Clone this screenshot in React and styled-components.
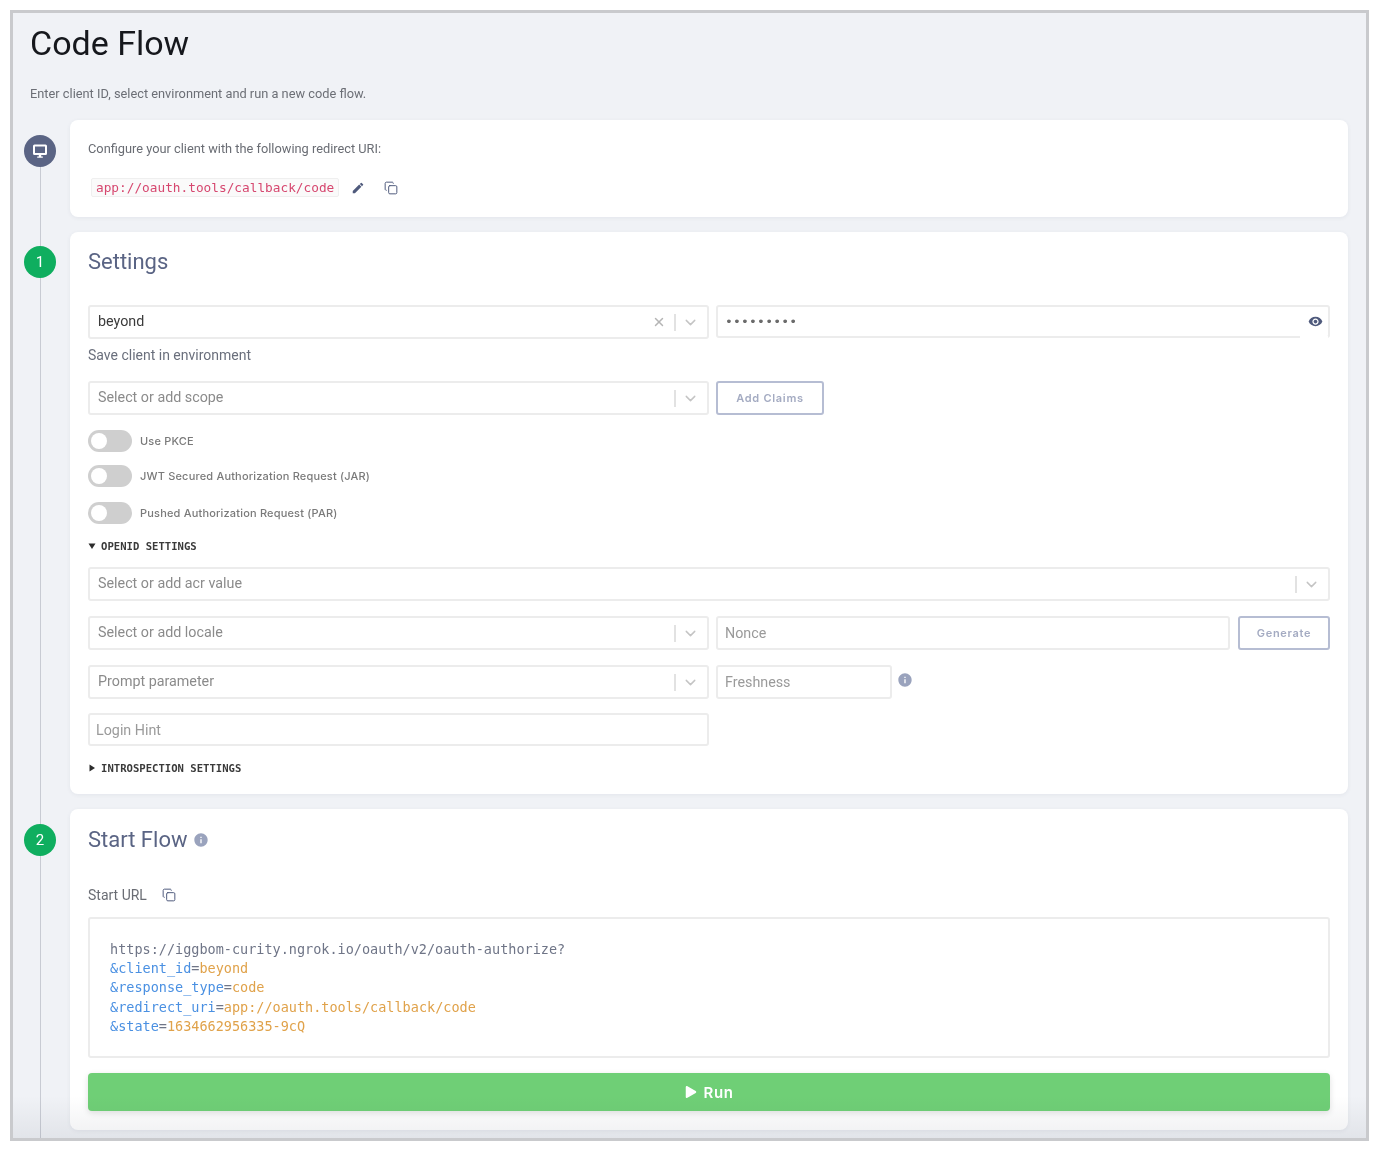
import React from "react";
import styled, { createGlobalStyle } from "styled-components";
import { ChevronDown, Copy, X } from "lucide-react";
import { MdEdit, MdInfo, MdVisibility } from "react-icons/md";
import { FaPlay } from "react-icons/fa";

const Global = createGlobalStyle`
  html, body {
    margin: 0;
    background: #fff;
    font-family: Roboto, "Liberation Sans", sans-serif;
  }
  * { box-sizing: border-box; }
`;

const mono = `"DejaVu Sans Mono", "Liberation Mono", monospace`;

const Frame = styled.main`
  position: relative;
  display: flex;
  flex-direction: column;
  width: 1359px;
  height: 1131px;
  margin: 10px;
  padding: 9px 18px 0 11px;
  background: #f0f2f6;
  border: 3px solid #c9cacd;
  overflow: hidden;
  filter: blur(0.4px);
`;

const BottomFade = styled.div`
  position: absolute;
  left: 0;
  right: 0;
  bottom: 0;
  height: 42px;
  background: linear-gradient(rgba(40, 50, 70, 0), rgba(40, 50, 70, 0.07));
  pointer-events: none;
`;

const Header = styled.header`
  padding-left: 6px;
`;

const PageTitle = styled.h1`
  margin: 0;
  font-size: 34px;
  line-height: 42px;
  font-weight: 400;
  color: #16181d;
`;

const Lead = styled.p`
  margin: 22px 0 18px;
  font-size: 12.8px;
  line-height: 16px;
  color: #6c6f76;
`;

const Steps = styled.div`
  position: relative;
  flex: 1;
  display: flex;
  flex-direction: column;
  gap: 15px;

  &::before {
    content: "";
    position: absolute;
    left: 15.5px;
    top: 30px;
    bottom: 0;
    width: 1px;
    background: #c8cbd3;
  }
`;

const Step = styled.section`
  position: relative;
  display: flex;
  gap: 14px;
  align-items: flex-start;
`;

const Marker = styled.div`
  flex: none;
  display: flex;
  align-items: center;
  justify-content: center;
  width: 32px;
  height: 32px;
  margin-top: ${({ $top }) => $top}px;
  border-radius: 50%;
  background: ${({ $color }) => $color};
  color: #fff;
  font-size: 15px;
`;

const Card = styled.div`
  flex: 1;
  min-width: 0;
  padding: ${({ $padding }) => $padding};
  background: #fff;
  border-radius: 8px;
  box-shadow: 0 1px 4px rgba(60, 70, 100, 0.07);
`;

const Muted = styled.div`
  font-size: 12.8px;
  line-height: 16px;
  color: #6a6d74;
`;

const UriRow = styled.div`
  display: flex;
  align-items: center;
  margin-top: 21px;
  padding-left: 3px;
`;

const CodeChip = styled.code`
  padding: 0 4px;
  height: 19px;
  font-family: ${mono};
  font-size: 12.78px;
  line-height: 17px;
  color: #d6476f;
  background: #fafafa;
  border: 1px solid #efefef;
  border-radius: 2px;
`;

const IconButton = styled.span`
  display: inline-flex;
  margin-left: ${({ $left }) => $left}px;
  margin-bottom: ${({ $lift }) => $lift || 0}px;
  color: ${({ $color }) => $color || "#4f5a7c"};
`;

const SectionTitle = styled.h2`
  display: flex;
  align-items: center;
  gap: 6px;
  margin: 0;
  font-size: 22px;
  line-height: 30px;
  font-weight: 400;
  color: #5a6484;
`;

const Form = styled.div`
  display: flex;
  flex-direction: column;
  margin-top: 28px;
`;

const Row = styled.div`
  display: flex;
  align-items: ${({ $center }) => ($center ? "center" : "stretch")};
  gap: 7px;
  margin-top: ${({ $top }) => $top || 0}px;
`;

const Select = styled.div`
  display: flex;
  align-items: center;
  flex: ${({ $full }) => ($full ? "1" : "none")};
  width: ${({ $full }) => ($full ? "auto" : "621px")};
  height: 34px;
  padding: 0 8px;
  background: #fff;
  border: 2px solid #ececec;
  border-radius: 3px;
`;

const SelectValue = styled.span`
  flex: 1;
  padding-bottom: 2px;
  font-size: 14.3px;
  color: ${({ $filled }) => ($filled ? "#3b3b3b" : "#8b8b8b")};
`;

const Separator = styled.span`
  width: 2px;
  height: 17px;
  margin: 0 6px 0 8px;
  background: #e2e2e2;
`;

const Input = styled.input`
  flex: ${({ $width }) => ($width ? "none" : "1")};
  width: ${({ $width }) => ($width ? `${$width}px` : "auto")};
  min-width: 0;
  height: ${({ $height }) => $height || 34}px;
  padding: 0 ${({ $pad }) => $pad || 7}px;
  font-family: inherit;
  font-size: 14.3px;
  color: #3b3b3b;
  background: #fff;
  border: 2px solid #ececec;
  border-radius: 3px;
  outline: none;

  &::placeholder {
    color: #9a9a9a;
    opacity: 1;
  }
`;

const SecretField = styled.div`
  position: relative;
  flex: 1;
  display: flex;
  align-items: center;
  justify-content: space-between;
  height: 33px;
  padding: 0 5px 0 7px;
  border: 2px solid #ececec;
  border-radius: 3px;

  &::after {
    content: "";
    position: absolute;
    right: 0;
    bottom: -2px;
    width: 28px;
    height: 2px;
    background: #fff;
  }
`;

const SecretDots = styled.span`
  font-family: ${mono};
  font-size: 13px;
  letter-spacing: 0.2px;
  color: #6b6b6b;
`;

const Hint = styled.div`
  margin-top: 8px;
  font-size: 14px;
  line-height: 16px;
  color: #6a6f7c;
`;

const OutlineButton = styled.button`
  flex: none;
  width: ${({ $width }) => $width}px;
  margin-left: ${({ $left }) => $left || 0}px;
  height: 34px;
  padding: 0;
  font-family: Inter, Roboto, sans-serif;
  font-size: 11px;
  font-weight: 600;
  letter-spacing: 0.7px;
  color: #a4abc2;
  background: #fff;
  border: 2px solid #b6bdd3;
  border-radius: 3px;
`;

const ToggleRow = styled.div`
  display: flex;
  align-items: center;
  gap: 8px;
  margin-top: ${({ $top }) => $top}px;
`;

const Toggle = styled.span`
  display: flex;
  align-items: center;
  width: 44px;
  height: 22px;
  padding: 0 3px;
  background: #cfcfcf;
  border-radius: 11px;

  &::before {
    content: "";
    width: 16px;
    height: 16px;
    background: #fff;
    border-radius: 50%;
  }
`;

const ToggleLabel = styled.span`
  font-family: Inter, Roboto, sans-serif;
  font-size: 11px;
  font-weight: 500;
  letter-spacing: 0.18px;
  color: #7a7a7a;
`;

const Disclosure = styled.div`
  display: flex;
  align-items: center;
  gap: 5px;
  height: 14px;
  margin-top: ${({ $top }) => $top}px;
  font-family: ${mono};
  font-size: 10.6px;
  font-weight: 700;
  color: #3a3a3a;
`;

const Caret = styled.svg`
  flex: none;
  width: 8px;
  height: 8px;
  fill: #2c2c2c;
`;

const UrlLabel = styled.div`
  display: flex;
  align-items: center;
  height: 16px;
  margin-top: 32px;
  font-size: 14px;
  color: #6a6d74;
`;

const CodeBox = styled.pre`
  height: 141px;
  margin: 14px 0 0;
  padding: 21px 20px;
  font-family: ${mono};
  font-size: 13.5px;
  line-height: 19.2px;
  color: #6f7587;
  background: #fff;
  border: 2px solid #ececec;
  border-radius: 3px;
`;

const Key = styled.span`
  color: #4a90e2;
`;

const Value = styled.span`
  color: #e0a24a;
`;

const RunButton = styled.button`
  display: flex;
  align-items: center;
  justify-content: center;
  gap: 7px;
  width: 100%;
  height: 38px;
  margin-top: 15px;
  font-family: Inter, Roboto, sans-serif;
  font-size: 15px;
  font-weight: 600;
  letter-spacing: 0.6px;
  color: #fff;
  background: #6fcf76;
  border: 0;
  border-radius: 4px;
  box-shadow: 0 2px 6px rgba(0, 0, 0, 0.12);
`;

const DownCaret = () => (
  <Caret viewBox="0 0 8 8">
    <path d="M0.5 1.5h7L4 7z" />
  </Caret>
);

const RightCaret = () => (
  <Caret viewBox="0 0 8 8">
    <path d="M1.5 0.5v7L7 4z" />
  </Caret>
);

const MonitorIcon = () => (
  <svg width="16" height="16" viewBox="0 0 16 16" fill="#fff">
    <path d="M2.5 1.5h11A1.5 1.5 0 0 1 15 3v7.5a1.5 1.5 0 0 1-1.5 1.5h-11A1.5 1.5 0 0 1 1 10.500V3a1.500 1.500 0 0 1 1.500-1.500zM3 3.400v6.700h10V3.400z" fillRule="evenodd" />
    <path d="M6.800 12h2.400v1.600h1.600v1.200H5.200v-1.200h1.600z" />
  </svg>
);

const DropdownField = ({ value, placeholder, clearable, full }) => (
  <Select $full={full}>
    <SelectValue $filled={!!value}>{value || placeholder}</SelectValue>
    {clearable && <X size={14} color="#b5b5b5" strokeWidth={2.5} />}
    <Separator />
    <ChevronDown size={17} color="#c4c4c4" strokeWidth={2} />
  </Select>
);

const SwitchRow = ({ label, top }) => (
  <ToggleRow $top={top}>
    <Toggle />
    <ToggleLabel>{label}</ToggleLabel>
  </ToggleRow>
);

const App = () => {
  return (
    <Frame>
      <Global />
      <Header>
        <PageTitle>Code Flow</PageTitle>
        <Lead>Enter client ID, select environment and run a new code flow.</Lead>
      </Header>
      <Steps>
        <Step>
          <Marker $top={15} $color="#5a6484">
            <MonitorIcon />
          </Marker>
          <Card $padding="21px 18px 20px">
            <Muted>Configure your client with the following redirect URI:</Muted>
            <UriRow>
              <CodeChip>app://oauth.tools/callback/code</CodeChip>
              <IconButton $left={12}>
                <MdEdit size={14} />
              </IconButton>
              <IconButton $left={19}>
                <Copy size={14} strokeWidth={1.7} />
              </IconButton>
            </UriRow>
          </Card>
        </Step>

        <Step>
          <Marker $top={14} $color="#0fae5f">1</Marker>
          <Card $padding="15px 18px 19px">
            <SectionTitle>Settings</SectionTitle>
            <Form>
              <Row>
                <DropdownField value="beyond" clearable />
                <SecretField>
                  <SecretDots>•••••••••</SecretDots>
                  <MdVisibility size={15} color="#4f5a7c" />
                </SecretField>
              </Row>
              <Hint>Save client in environment</Hint>
              <Row $top={18}>
                <DropdownField placeholder="Select or add scope" />
                <OutlineButton $width={108}>Add Claims</OutlineButton>
              </Row>
              <SwitchRow label="Use PKCE" top={15} />
              <SwitchRow label="JWT Secured Authorization Request (JAR)" top={13} />
              <SwitchRow label="Pushed Authorization Request (PAR)" top={15} />
              <Disclosure $top={15}>
                <DownCaret />
                OPENID SETTINGS
              </Disclosure>
              <Row $top={14}>
                <DropdownField placeholder="Select or add acr value" full />
              </Row>
              <Row $top={15}>
                <DropdownField placeholder="Select or add locale" />
                <Input placeholder="Nonce" />
                <OutlineButton $width={92} $left={1}>Generate</OutlineButton>
              </Row>
              <Row $top={15} $center>
                <DropdownField placeholder="Prompt parameter" />
                <Input placeholder="Freshness" $width={176} />
                <IconButton $left={-2} $lift={4} $color="#9aa3bd">
                  <MdInfo size={16} />
                </IconButton>
              </Row>
              <Row $top={14}>
                <Input placeholder="Login Hint" $width={621} $height={33} $pad={6} />
              </Row>
              <Disclosure $top={15}>
                <RightCaret />
                INTROSPECTION SETTINGS
              </Disclosure>
            </Form>
          </Card>
        </Step>

        <Step>
          <Marker $top={15} $color="#0fae5f">2</Marker>
          <Card $padding="16px 18px 19px">
            <SectionTitle>
              Start Flow
              <IconButton $left={0} $color="#9aa3bd">
                <MdInfo size={16} />
              </IconButton>
            </SectionTitle>
            <UrlLabel>
              Start URL
              <IconButton $left={15}>
                <Copy size={14} strokeWidth={1.7} />
              </IconButton>
            </UrlLabel>
            <CodeBox>
              https://iggbom-curity.ngrok.io/oauth/v2/oauth-authorize?{"\n"}
              <Key>&amp;client_id</Key>=<Value>beyond</Value>{"\n"}
              <Key>&amp;response_type</Key>=<Value>code</Value>{"\n"}
              <Key>&amp;redirect_uri</Key>=<Value>app://oauth.tools/callback/code</Value>{"\n"}
              <Key>&amp;state</Key>=<Value>1634662956335-9cQ</Value>
            </CodeBox>
            <RunButton>
              <FaPlay size={12} />
              Run
            </RunButton>
          </Card>
        </Step>
      </Steps>
      <BottomFade />
    </Frame>
  );
};

export default App;
